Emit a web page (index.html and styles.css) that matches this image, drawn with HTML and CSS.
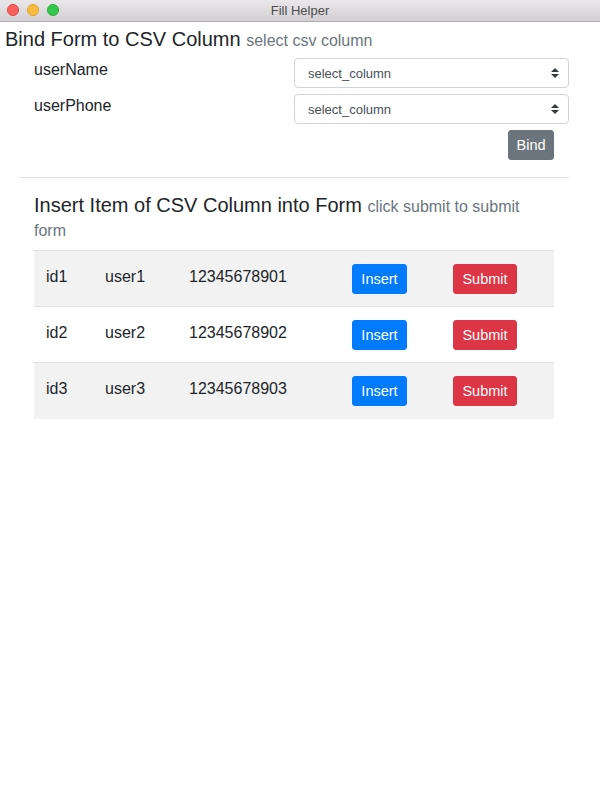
FILE: index.html
```html
<!DOCTYPE html>
<html>
<head>
<meta charset="utf-8">
<link rel="stylesheet" href="styles.css">
</head>
<body>
<div class="titlebar">
  <div class="lights">
    <span class="light l-close"></span>
    <span class="light l-min"></span>
    <span class="light l-max"></span>
  </div>
  <div class="title">Fill Helper</div>
</div>
<main class="page">
  <h4 class="h1">Bind Form to CSV Column <small>select csv column</small></h4>
  <div class="bindform">
    <div class="frow">
      <label class="flabel">userName</label>
      <div class="select"><span>select_column</span>
        <svg class="arrows" width="8" height="10" viewBox="0 0 8 10"><path d="M4 0 L8 4 L0 4 Z M0 6 L8 6 L4 10 Z" fill="#343a40"/></svg>
      </div>
    </div>
    <div class="frow">
      <label class="flabel">userPhone</label>
      <div class="select"><span>select_column</span>
        <svg class="arrows" width="8" height="10" viewBox="0 0 8 10"><path d="M4 0 L8 4 L0 4 Z M0 6 L8 6 L4 10 Z" fill="#343a40"/></svg>
      </div>
    </div>
    <div class="bindrow"><button class="btn btn-gray">Bind</button></div>
  </div>
  <hr class="sep">
  <section class="insert">
    <h4 class="h2">Insert Item of CSV Column into Form <small>click submit to submit</small><br><small>form</small></h4>
    <table class="tbl">
      <tr class="odd">
        <td class="c1">id1</td><td class="c2">user1</td><td class="c3">12345678901</td>
        <td class="c4"><button class="btn btn-blue">Insert</button></td>
        <td class="c5"><button class="btn btn-red">Submit</button></td>
      </tr>
      <tr>
        <td class="c1">id2</td><td class="c2">user2</td><td class="c3">12345678902</td>
        <td class="c4"><button class="btn btn-blue">Insert</button></td>
        <td class="c5"><button class="btn btn-red">Submit</button></td>
      </tr>
      <tr class="odd">
        <td class="c1">id3</td><td class="c2">user3</td><td class="c3">12345678903</td>
        <td class="c4"><button class="btn btn-blue">Insert</button></td>
        <td class="c5"><button class="btn btn-red">Submit</button></td>
      </tr>
    </table>
  </section>
</main>
</body>
</html>
```

FILE: styles.css
```css
* { box-sizing: border-box; }
html, body { margin: 0; padding: 0; background: #fff; }
body {
  font-family: "Liberation Sans", Arial, sans-serif;
  color: #212529;
  width: 600px;
  height: 800px;
}
.titlebar {
  height: 22px;
  background: linear-gradient(#e9e7e9, #d2d0d2);
  border-bottom: 1px solid #b1afb1;
  position: relative;
  display: flex;
  align-items: center;
  justify-content: center;
}
.lights {
  position: absolute;
  left: 7px;
  top: 4px;
  display: flex;
  gap: 8px;
}
.light {
  width: 12px;
  height: 12px;
  border-radius: 50%;
  display: block;
}
.l-close { background: #fc605c; border: 1px solid #e0443e; }
.l-min { background: #fdbc40; border: 1px solid #dea123; }
.l-max { background: #34c84a; border: 1px solid #27aa35; }
.title {
  font-size: 13px;
  color: #4d4d4d;
}
.page { padding: 0; }
.h1 {
  margin: 0;
  padding: 5px 0 0 5px;
  font-size: 20px;
  font-weight: normal;
  line-height: 24px;
}
small {
  font-size: 16px;
  color: #6c757d;
}
.bindform {
  margin: 5px 31px 0 34px;
}
.frow {
  display: flex;
  justify-content: space-between;
  margin-bottom: 6px;
}
.flabel {
  font-size: 16px;
  line-height: 24px;
}
.select {
  width: 275px;
  height: 30px;
  border: 1px solid #ced4da;
  border-radius: 4px;
  display: flex;
  align-items: center;
  justify-content: space-between;
  padding: 0 9px 0 13px;
  font-size: 13px;
  color: #495057;
}
.bindrow {
  display: flex;
  justify-content: flex-end;
  padding-right: 15px;
}
.btn {
  font-family: "Liberation Sans", Arial, sans-serif;
  font-size: 14.5px;
  line-height: 21px;
  padding: 4px 6px;
  border-radius: 3px;
  border: 1px solid transparent;
  color: #fff;
  height: 30px;
}
.btn-gray { background: #6c757d; border-color: #6c757d; width: 46px; }
.btn-blue { background: #007bff; border-color: #007bff; width: 55px; }
.btn-red { background: #dc3545; border-color: #dc3545; width: 64px; }
.sep {
  margin: 17px 31px 0 19px;
  border: 0;
  border-top: 1px solid #e1e1e1;
}
.insert {
  margin: 0 46px 0 34px;
  padding-top: 16px;
}
.h2 {
  margin: 0 0 8px 0;
  font-size: 20px;
  font-weight: normal;
  line-height: 22px;
}
.tbl {
  width: 520px;
  border-collapse: collapse;
  font-size: 16px;
}
.tbl td {
  border-top: 1px solid #dee2e6;
  height: 56px;
  padding: 0 12px;
  vertical-align: middle;
}
.tbl td:not(.c4):not(.c5) { padding-bottom: 4px; }
.tbl tr.odd { background: #f2f2f2; }
.c1 { width: 59px; }
.c2 { width: 84px; }
.c3 { width: 163px; }
.c4 { width: 101px; }
.c5 { width: 113px; }
```
